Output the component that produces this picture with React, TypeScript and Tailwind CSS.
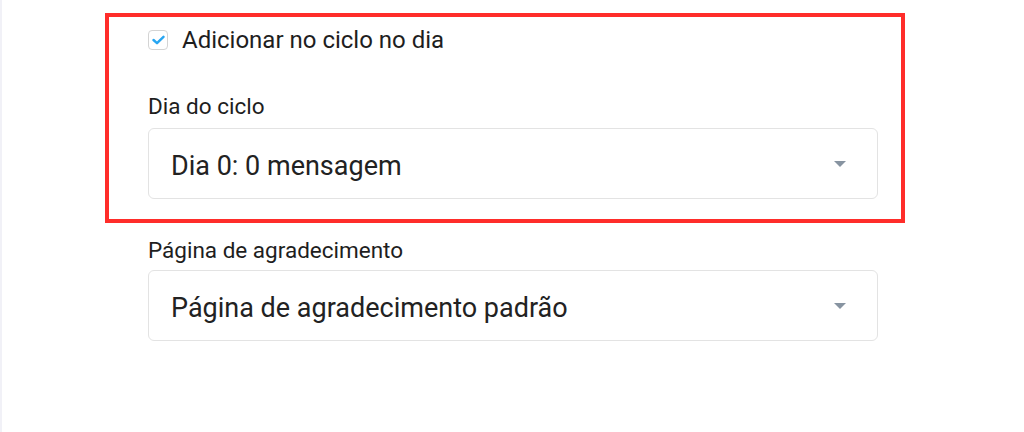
import React from 'react';

const font = { fontFamily: 'Roboto, "Liberation Sans", sans-serif' };

const Caret = () => (
    <svg width="12" height="6" viewBox="0 0 12 6" className="shrink-0">
        <path d="M0 0 L12 0 L6 6 Z" fill="#8794a1" />
    </svg>
);

const SelectBox = ({ value }: { value: string }) => (
    <div className="flex h-[71px] items-center justify-between rounded-[6px] border-[1.5px] border-[#e3e3e3] bg-white pl-[22px] pr-[31px]">
        <span className="pt-[6px] text-[27px] text-[#222]">{value}</span>
        <Caret />
    </div>
);

export default function App() {
    return (
        <div className="min-h-[432px] w-full border-l-[2px] border-[#f1f1f7] bg-white" style={font}>
            <div className="pl-[103px] pt-[13px]">
                {/* highlighted block */}
                <div className="w-[800px] border-4 border-[#ff2d2a] pb-[20px] pl-[39px] pr-[23px] pt-[13px]">
                    <div className="flex h-[20px] items-center gap-[14px]">
                        <div className="flex h-[20px] w-[20px] items-center justify-center rounded-[4px] border-[1.5px] border-[#d4d4d4] bg-white">
                            <svg width="13" height="10" viewBox="0 0 13 10">
                                <path d="M1.5 5 L5 8.2 L11.5 1.8" fill="none" stroke="#27a6f2" strokeWidth="2.4" strokeLinecap="round" strokeLinejoin="round" />
                            </svg>
                        </div>
                        <span className="text-[24px] leading-[20px] text-[#1e1e1e]">Adicionar no ciclo no dia</span>
                    </div>
                    <div className="mt-[42px] text-[22.5px] leading-[28px] text-[#1e1e1e]">Dia do ciclo</div>
                    <div className="mt-[8px]">
                        <SelectBox value="Dia 0: 0 mensagem" />
                    </div>
                </div>

                <div className="w-[800px] pl-[43px] pr-[27px]">
                    <div className="mt-[13px] text-[22.5px] leading-[28px] text-[#1e1e1e]">Página de agradecimento</div>
                    <div className="mt-[6px]">
                        <SelectBox value="Página de agradecimento padrão" />
                    </div>
                </div>
            </div>
        </div>
    );
}
